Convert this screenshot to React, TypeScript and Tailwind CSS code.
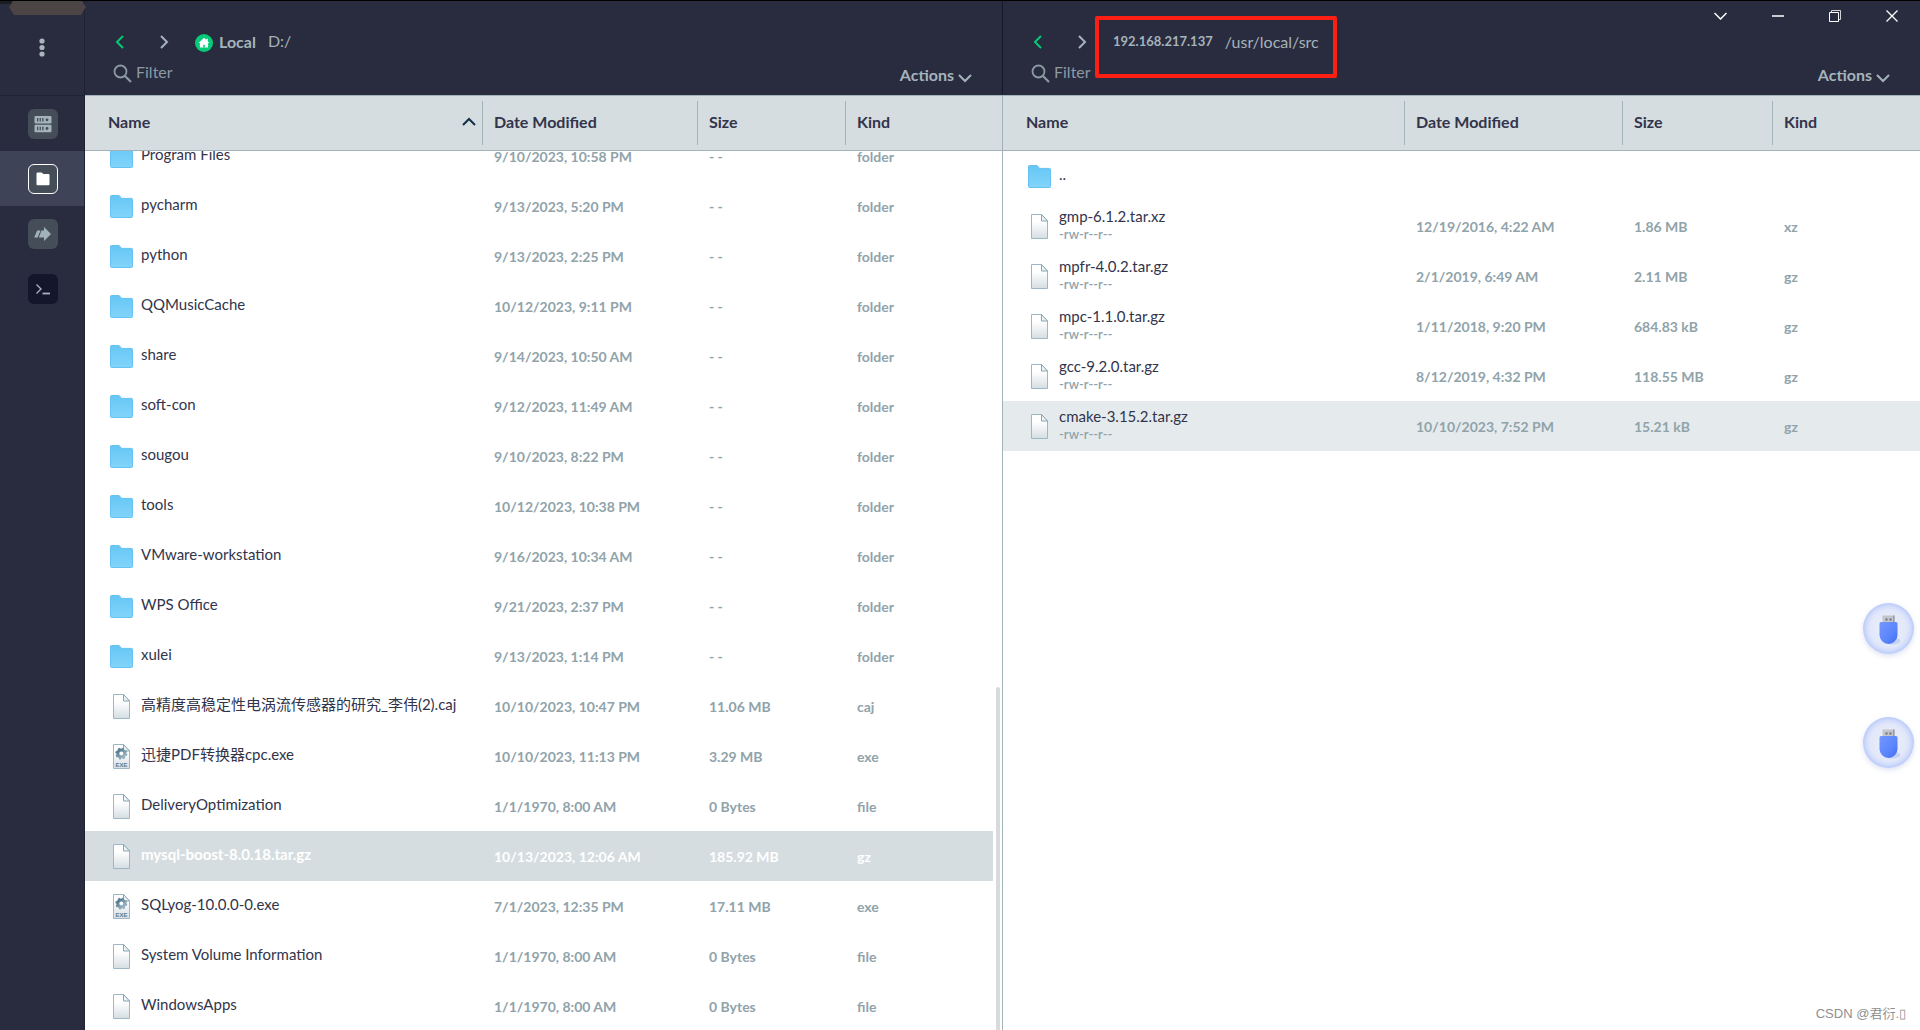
import { useLayoutEffect, useRef } from "react";

type IconKind = "folder" | "file" | "exe";

interface Entry {
  name: string;
  date?: string;
  size?: string;
  kind?: string;
  icon: IconKind;
  mode?: string;
  state?: "selected" | "hovered";
}

const folder = (name: string, date: string): Entry => ({ name, date, size: "- -", kind: "folder", icon: "folder" });

const localEntries: Entry[] = [
  folder("Program Files", "9/10/2023, 10:58 PM"),
  folder("pycharm", "9/13/2023, 5:20 PM"),
  folder("python", "9/13/2023, 2:25 PM"),
  folder("QQMusicCache", "10/12/2023, 9:11 PM"),
  folder("share", "9/14/2023, 10:50 AM"),
  folder("soft-con", "9/12/2023, 11:49 AM"),
  folder("sougou", "9/10/2023, 8:22 PM"),
  folder("tools", "10/12/2023, 10:38 PM"),
  folder("VMware-workstation", "9/16/2023, 10:34 AM"),
  folder("WPS Office", "9/21/2023, 2:37 PM"),
  folder("xulei", "9/13/2023, 1:14 PM"),
  { name: "高精度高稳定性电涡流传感器的研究_李伟(2).caj", date: "10/10/2023, 10:47 PM", size: "11.06 MB", kind: "caj", icon: "file" },
  { name: "迅捷PDF转换器cpc.exe", date: "10/10/2023, 11:13 PM", size: "3.29 MB", kind: "exe", icon: "exe" },
  { name: "DeliveryOptimization", date: "1/1/1970, 8:00 AM", size: "0 Bytes", kind: "file", icon: "file" },
  { name: "mysql-boost-8.0.18.tar.gz", date: "10/13/2023, 12:06 AM", size: "185.92 MB", kind: "gz", icon: "file", state: "selected" },
  { name: "SQLyog-10.0.0-0.exe", date: "7/1/2023, 12:35 PM", size: "17.11 MB", kind: "exe", icon: "exe" },
  { name: "System Volume Information", date: "1/1/1970, 8:00 AM", size: "0 Bytes", kind: "file", icon: "file" },
  { name: "WindowsApps", date: "1/1/1970, 8:00 AM", size: "0 Bytes", kind: "file", icon: "file" },
];

const remoteEntries: Entry[] = [
  { name: "..", icon: "folder" },
  { name: "gmp-6.1.2.tar.xz", mode: "-rw-r--r--", date: "12/19/2016, 4:22 AM", size: "1.86 MB", kind: "xz", icon: "file" },
  { name: "mpfr-4.0.2.tar.gz", mode: "-rw-r--r--", date: "2/1/2019, 6:49 AM", size: "2.11 MB", kind: "gz", icon: "file" },
  { name: "mpc-1.1.0.tar.gz", mode: "-rw-r--r--", date: "1/11/2018, 9:20 PM", size: "684.83 kB", kind: "gz", icon: "file" },
  { name: "gcc-9.2.0.tar.gz", mode: "-rw-r--r--", date: "8/12/2019, 4:32 PM", size: "118.55 MB", kind: "gz", icon: "file" },
  { name: "cmake-3.15.2.tar.gz", mode: "-rw-r--r--", date: "10/10/2023, 7:52 PM", size: "15.21 kB", kind: "gz", icon: "file", state: "hovered" },
];

function Gradients() {
  return (
    <svg className="absolute size-0" aria-hidden="true">
      <defs>
        <linearGradient id="folderFill" x1="0" y1="0" x2="0" y2="1">
          <stop offset="0" stopColor="#66c6f5" />
          <stop offset="1" stopColor="#82d4fa" />
        </linearGradient>
        <linearGradient id="paperFill" x1="0" y1="0" x2="0" y2="1">
          <stop offset="0.3" stopColor="#ffffff" />
          <stop offset="1" stopColor="#d5dee3" />
        </linearGradient>
        <linearGradient id="gearFill" x1="0" y1="0" x2="1" y2="1">
          <stop offset="0" stopColor="#4b7389" />
          <stop offset="1" stopColor="#a3bcc8" />
        </linearGradient>
        <radialGradient id="ballFill">
          <stop offset="0" stopColor="#eef1fa" />
          <stop offset="0.72" stopColor="#e2e8fa" />
          <stop offset="0.86" stopColor="#d3ddfb" />
          <stop offset="1" stopColor="#b9cafb" />
        </radialGradient>
        <linearGradient id="usbFill" x1="0" y1="0" x2="1" y2="1">
          <stop offset="0" stopColor="#7397ff" />
          <stop offset="0.6" stopColor="#5b85fb" />
          <stop offset="1" stopColor="#3f6cf4" />
        </linearGradient>
      </defs>
    </svg>
  );
}

function FolderIcon() {
  return (
    <svg width="23" height="23" viewBox="0 0 23 23" aria-hidden="true">
      <path d="M0.5 1.5a1 1 0 0 1 1-1h7.6l2.6 2.9h9.8a1 1 0 0 1 1 1v17.1a1 1 0 0 1-1 1h-20a1 1 0 0 1-1-1z" fill="url(#folderFill)" stroke="#66c2f0" />
    </svg>
  );
}

function FileIcon({ exe }: { exe?: boolean }) {
  return (
    <svg width="17" height="25" viewBox="0 0 17 25" aria-hidden="true">
      <path d="M0.5 0.5H10.5L16.5 7V24.5H0.5z" fill="url(#paperFill)" stroke="#9db8c5" />
      <path d="M10.5 0.5V7H16.5z" fill="#eef3f5" stroke="#86a6b6" />
      {exe && (
        <>
          <circle cx="8.3" cy="9.6" r="3.5" fill="none" stroke="url(#gearFill)" strokeWidth="3" />
          <circle cx="8.3" cy="9.6" r="5.2" fill="none" stroke="url(#gearFill)" strokeWidth="1.6" strokeDasharray="2.1 1.98" />
          <text x="8.5" y="22.6" textAnchor="middle" fontSize="6" fontWeight="700" fontFamily="Liberation Sans, sans-serif" fill="#587f94">EXE</text>
        </>
      )}
    </svg>
  );
}

function Chevron({ dir, className }: { dir: "left" | "right" | "down" | "up"; className?: string }) {
  const side = dir === "left" || dir === "right";
  const d = { left: "M8 1L2 7l6 6", right: "M2 1l6 6-6 6", down: "M1 2l6 6 6-6", up: "M1 8l6-6 6 6" }[dir];
  return (
    <svg className={className} width={side ? 10 : 14} height={side ? 14 : 10} viewBox={side ? "0 0 10 14" : "0 0 14 10"} fill="none" stroke="currentColor" strokeWidth="2" aria-hidden="true">
      <path d={d} />
    </svg>
  );
}

function Rail() {
  const tile = "flex size-[30px] items-center justify-center rounded-md";
  return (
    <nav className="flex w-[85px] shrink-0 flex-col border-r border-[#1f2135] bg-[#292b3e]" aria-label="Sections">
      <div className="flex h-[95px] items-center justify-center border-b border-[#1f2135]">
        <button aria-label="Menu" className="flex size-8 items-center justify-center">
          <svg width="6" height="20" viewBox="0 0 6 20" fill="#a9b6bd">
            <circle cx="3" cy="3" r="2.6" />
            <circle cx="3" cy="9.5" r="2.6" />
            <circle cx="3" cy="16" r="2.6" />
          </svg>
        </button>
      </div>
      <button aria-label="Hosts" className="flex h-[55px] items-center justify-center pl-0.5">
        <span className={`${tile} bg-[#454d58]`}>
          <svg width="18" height="18" viewBox="0 0 18 18" fill="#a3b3bc">
            <rect x="0.5" y="1" width="17" height="7.5" rx="1" />
            <rect x="0.5" y="9.7" width="17" height="7.5" rx="1" />
            <g fill="#454d58">
              <path d="M3 3h1.3v3.6H3zM5.6 3h1.3v3.6H5.6zM8.2 3h1.3v3.6H8.2zM3 11.7h1.3v3.6H3zM5.6 11.7h1.3v3.6H5.6zM8.2 11.7h1.3v3.6H8.2z" />
              <circle cx="13" cy="4.8" r="1.4" />
              <circle cx="13" cy="13.5" r="1.4" />
            </g>
          </svg>
        </span>
      </button>
      <button aria-label="SFTP" aria-current="page" className="flex h-[55px] items-center justify-center bg-[#3f4357] pl-0.5">
        <span className={`${tile} border border-white bg-[#454d58]`}>
          <svg width="14" height="14" viewBox="0 0 14 14" fill="#ffffff">
            <path d="M0.5 1.5a1 1 0 0 1 1-1h4.2l1.7 1.6h5.1a1 1 0 0 1 1 1v9.2a1 1 0 0 1-1 1h-11a1 1 0 0 1-1-1z" />
          </svg>
        </span>
      </button>
      <button aria-label="Port forwarding" className="flex h-[55px] items-center justify-center pl-0.5">
        <span className={`${tile} bg-[#454d58]`}>
          <svg width="18" height="16" viewBox="0 0 18 16" fill="#a3b3bc">
            <path d="M3.200 4.500h3.300L3.600 11.500H0.200z" />
            <path d="M7.500 4.500H10V1l7 7-7 7v-3.500H4.800z" />
          </svg>
        </span>
      </button>
      <button aria-label="Terminal" className="flex h-[55px] items-center justify-center pl-0.5">
        <span className={`${tile} bg-[#14172b]`}>
          <svg width="16" height="12" viewBox="0 0 16 12" fill="none" stroke="#a3b3bc">
            <path d="M1.500 1.500L6 6l-4.500 4.500" strokeWidth="1.400" />
            <path d="M7.500 10.500h7.500" strokeWidth="1.800" />
          </svg>
        </span>
      </button>
    </nav>
  );
}

function Toolbar({ id, remote }: { id: string; remote?: boolean }) {
  return (
    <header className="flex h-[94px] shrink-0 flex-col bg-[#292b3e] pt-[27px] pr-[30px] pl-7 text-[#a5b3bb]">
      <div className="flex h-7 items-center">
        <button aria-label="Back" className="w-[46px] pl-0.5 text-[#04c976]">
          <Chevron dir="left" />
        </button>
        <button aria-label="Forward" className="w-9">
          <Chevron dir="right" />
        </button>
        {remote ? (
          <div className="relative flex items-center gap-3">
            <span className="text-[13px] font-bold">192.168.217.137</span>
            <a href="#src" className="text-base">/usr/local/src</a>
            <span className="pointer-events-none absolute -inset-x-4.5 -top-3.5 h-[62px] rounded-xs border-4 border-[#fd1f13]" />
          </div>
        ) : (
          <>
            <svg width="18" height="18" viewBox="0 0 18 18" className="mt-0.5" aria-hidden="true">
              <circle cx="9" cy="9" r="9" fill="#06cb79" />
              <path d="M9 3.700L3.600 9h1.300v4.500h8.200V9h1.300l-1.600-1.600V4.700h-1.500v1.200z" fill="#fff" />
              <path d="M8.200 13.500v-2.700h1.600v2.700z" fill="#06cb79" />
            </svg>
            <span className="ml-1.5 text-base font-bold">Local</span>
            <a href="#drive" className="ml-3 pb-0.5 text-base">D:/</a>
          </>
        )}
      </div>
      <div className="flex h-[34px] items-center justify-between">
        <label htmlFor={id} className="flex items-center gap-1">
          <svg width="19" height="19" viewBox="0 0 19 19" fill="none" stroke="#8b9aa3" strokeWidth="1.800" aria-label="Filter">
            <circle cx="7.500" cy="7.500" r="6" />
            <path d="M12 12l6 6" strokeWidth="2.200" />
          </svg>
          <input id={id} type="text" placeholder="Filter" className="w-10 bg-transparent pb-0.5 text-base text-[#8b9aa3] outline-none placeholder:text-[#8b9aa3]" />
        </label>
        <button className="flex items-center gap-1 pt-1 text-base font-bold">
          Actions
          <Chevron dir="down" className="mt-1.5" />
        </button>
      </div>
    </header>
  );
}

function HeadCell({ label, first, sorted }: { label: string; first?: boolean; sorted?: boolean }) {
  return (
    <th scope="col" className="sticky top-0 z-10 h-14 border-y border-[#a3b3ba] bg-[#d5dde0] p-0 text-left text-base font-bold text-[#32344b]">
      <div className={first ? "flex h-11 items-center justify-between pr-1.5 pb-0.5 pl-[23px]" : "flex h-11 items-center border-l border-[#a3b3ba] pb-0.5 pl-[11px]"}>
        {label}
        {sorted && <Chevron dir="up" className="text-[#10304a]" />}
      </div>
    </th>
  );
}

function Row({ entry }: { entry: Entry }) {
  const selected = entry.state === "selected";
  const bg = selected ? "bg-[#d5dde0]" : entry.state === "hovered" ? "bg-[#e5ebed]" : "";
  const cell = `p-0 pt-0.5 pl-3 text-sm font-bold ${selected ? "text-white" : "text-[#90a3aa]"} ${bg}`;
  return (
    <tr className="h-[50px]" aria-selected={selected}>
      <td className={`p-0 pl-[25px] ${bg}`}>
        <div className="flex items-center">
          <span className="flex w-[23px] shrink-0 justify-center">
            {entry.icon === "folder" ? <FolderIcon /> : <FileIcon exe={entry.icon === "exe"} />}
          </span>
          <span className="ml-2 flex flex-col pb-1">
            <span className={`text-[15px] leading-5 whitespace-nowrap ${selected ? "font-bold text-white" : "text-[#32344b]"}`}>{entry.name}</span>
            {entry.mode && <span className="text-[13px] leading-4 font-semibold text-[#90a3aa]">{entry.mode}</span>}
          </span>
        </div>
      </td>
      <td className={cell}>{entry.date}</td>
      <td className={cell}>{entry.size}</td>
      <td className={cell}>{entry.kind}</td>
    </tr>
  );
}

function FileTable({ entries, label, scrollable }: { entries: Entry[]; label: string; scrollable?: boolean }) {
  const box = useRef<HTMLDivElement>(null);
  useLayoutEffect(() => {
    if (scrollable && box.current) box.current.scrollTop = 20;
  }, [scrollable]);
  return (
    <div className="relative min-h-0 flex-1">
      <div ref={box} className="h-full overflow-hidden">
        <table aria-label={label} className="w-full table-fixed border-separate border-spacing-0">
          <colgroup>
            <col />
            <col className={scrollable ? "w-[215px]" : "w-[218px]"} />
            <col className={scrollable ? "w-[148px]" : "w-[150px]"} />
            <col className="w-[148px]" />
            {scrollable && <col className="w-[9px]" />}
          </colgroup>
          <thead>
            <tr>
              <HeadCell label="Name" first sorted={scrollable} />
              <HeadCell label="Date Modified" />
              <HeadCell label="Size" />
              <HeadCell label="Kind" />
              {scrollable && <td className="sticky top-0 z-10 border-y border-[#a3b3ba] bg-[#d5dde0] p-0" />}
            </tr>
          </thead>
          <tbody>
            {entries.map((entry) => (
              <Row key={entry.name} entry={entry} />
            ))}
          </tbody>
        </table>
      </div>
      {scrollable && <div className="absolute right-0.5 bottom-0 h-[343px] w-1 rounded-t-sm bg-[#d9dadb]" />}
    </div>
  );
}

function WindowControls() {
  const button = "flex h-[30px] w-[57px] items-center justify-center";
  return (
    <div className="absolute top-0 right-0 flex text-white">
      <button aria-label="More" className={button}>
        <svg width="13" height="8" viewBox="0 0 13 8" fill="none" stroke="currentColor" strokeWidth="1.500"><path d="M0.500 1l6 6 6-6" /></svg>
      </button>
      <button aria-label="Minimize" className={button}>
        <svg width="12" height="2" viewBox="0 0 12 2"><path d="M0 1h12" stroke="currentColor" strokeWidth="1.500" /></svg>
      </button>
      <button aria-label="Restore" className={button}>
        <svg width="12" height="12" viewBox="0 0 12 12" fill="none" stroke="currentColor"><path d="M2.500 2.500v-2h9v9h-2" strokeOpacity="0.800" /><path d="M0.500 2.500h9v9h-9z" /></svg>
      </button>
      <button aria-label="Close" className={button}>
        <svg width="12" height="12" viewBox="0 0 12 12" stroke="currentColor" strokeWidth="1.300"><path d="M0.500 0.500l11 11M11.500 0.500l-11 11" /></svg>
      </button>
    </div>
  );
}

function UsbBall() {
  return (
    <button aria-label="USB drive" className="size-[51px] rounded-full shadow-[0_2px_5px_rgba(120,140,200,0.25)]">
      <svg width="51" height="51" viewBox="0 0 51 51">
        <circle cx="25.500" cy="25.500" r="25.500" fill="url(#ballFill)" />
        <ellipse cx="29" cy="38" rx="8.500" ry="3.500" fill="#8ea6e8" opacity="0.350" />
        <path d="M19.500 12.500h12v7h-12z" fill="#c3c5cb" />
        <path d="M30.200 12.500h1.300v7h-1.300z" fill="#8f929b" />
        <path d="M22.500 15.500h2v2h-2zM26.500 15.500h2v2h-2z" fill="#6d7078" />
        <path d="M16.500 20.500a1.500 1.500 0 0 1 1.500-1.500h15a1.500 1.500 0 0 1 1.500 1.500v11.500a9 9 0 0 1-18 0z" fill="url(#usbFill)" />
      </svg>
    </button>
  );
}

export default function App() {
  return (
    <div className="relative flex h-screen overflow-hidden border-t border-black bg-white font-['Lato','Noto_Sans_CJK_SC',sans-serif]">
      <Gradients />
      <Rail />
      <svg className="absolute top-0 left-0" width="88" height="15" viewBox="0 0 88 15" aria-hidden="true">
        <path d="M0 0h12v3H0z" fill="#1b1d22" />
        <path d="M13 0h69l4 6-5 8H14L9 6z" fill="#4b4645" />
      </svg>
      <main className="flex min-w-0 flex-1">
        <section className="flex min-w-0 flex-1 flex-col" aria-label="Local files">
          <Toolbar id="filter-local" />
          <FileTable label="Local files" entries={localEntries} scrollable />
        </section>
        <div className="flex w-px flex-col">
          <div className="h-[94px] bg-[#16182b]" />
          <div className="flex-1 bg-[#a3b3ba]" />
        </div>
        <section className="flex min-w-0 flex-1 flex-col" aria-label="Remote files">
          <Toolbar id="filter-remote" remote />
          <FileTable label="Remote files" entries={remoteEntries} />
        </section>
      </main>
      <WindowControls />
      <div className="absolute right-1.5 bottom-[262px] flex flex-col gap-[63px]">
        <UsbBall />
        <UsbBall />
      </div>
      <p className="absolute right-3.5 bottom-1.5 text-[13px] leading-5 font-normal text-[#8f8f8f] font-['Liberation_Sans','Noto_Sans_CJK_SC',sans-serif]">CSDN @君衍.▯</p>
    </div>
  );
}
